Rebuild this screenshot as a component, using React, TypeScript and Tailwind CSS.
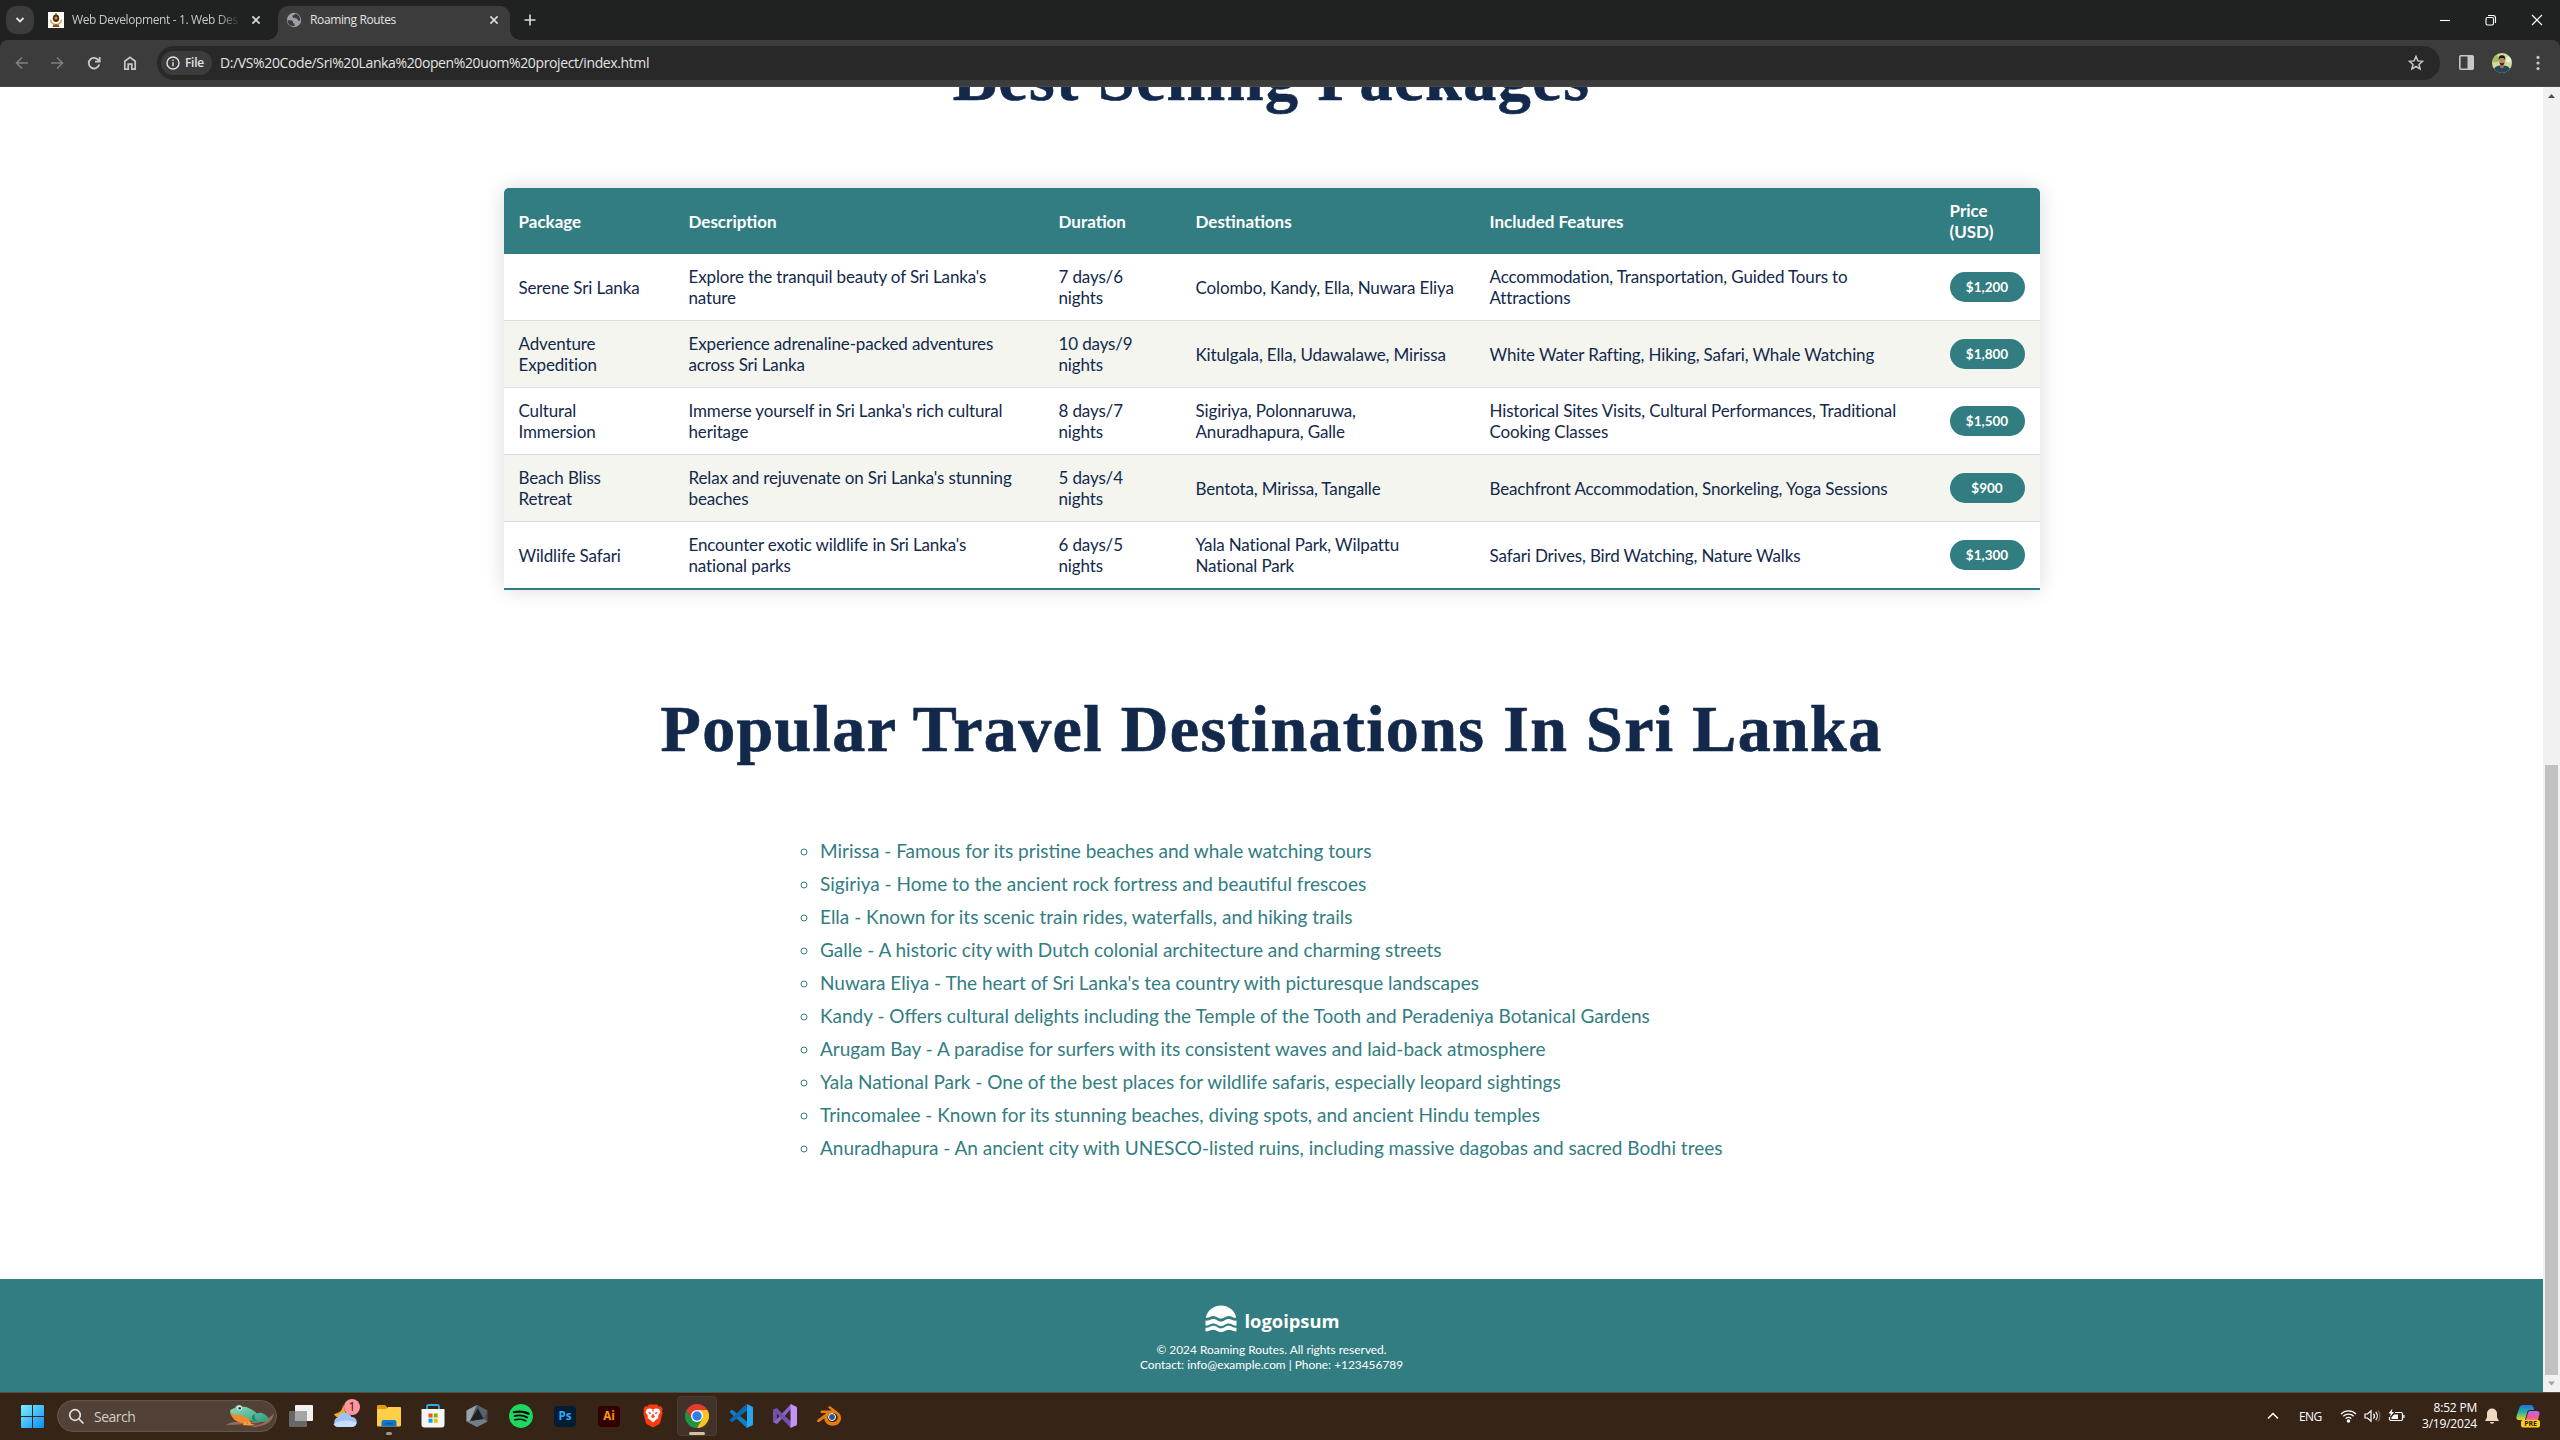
import type { ReactNode } from 'react';
import { SiSpotify, SiBlender } from 'react-icons/si';

const packages = [
  ['Serene Sri Lanka', "Explore the tranquil beauty of Sri Lanka's nature", '7 days/6 nights', 'Colombo, Kandy, Ella, Nuwara Eliya', 'Accommodation, Transportation, Guided Tours to Attractions', '$1,200'],
  ['Adventure Expedition', 'Experience adrenaline-packed adventures across Sri Lanka', '10 days/9 nights', 'Kitulgala, Ella, Udawalawe, Mirissa', 'White Water Rafting, Hiking, Safari, Whale Watching', '$1,800'],
  ['Cultural Immersion', "Immerse yourself in Sri Lanka's rich cultural heritage", '8 days/7 nights', 'Sigiriya, Polonnaruwa, Anuradhapura, Galle', 'Historical Sites Visits, Cultural Performances, Traditional Cooking Classes', '$1,500'],
  ['Beach Bliss Retreat', "Relax and rejuvenate on Sri Lanka's stunning beaches", '5 days/4 nights', 'Bentota, Mirissa, Tangalle', 'Beachfront Accommodation, Snorkeling, Yoga Sessions', '$900'],
  ['Wildlife Safari', "Encounter exotic wildlife in Sri Lanka's national parks", '6 days/5 nights', 'Yala National Park, Wilpattu National Park', 'Safari Drives, Bird Watching, Nature Walks', '$1,300'],
];

const destinations = [
  'Mirissa - Famous for its pristine beaches and whale watching tours',
  'Sigiriya - Home to the ancient rock fortress and beautiful frescoes',
  'Ella - Known for its scenic train rides, waterfalls, and hiking trails',
  'Galle - A historic city with Dutch colonial architecture and charming streets',
  "Nuwara Eliya - The heart of Sri Lanka's tea country with picturesque landscapes",
  'Kandy - Offers cultural delights including the Temple of the Tooth and Peradeniya Botanical Gardens',
  'Arugam Bay - A paradise for surfers with its consistent waves and laid-back atmosphere',
  'Yala National Park - One of the best places for wildlife safaris, especially leopard sightings',
  'Trincomalee - Known for its stunning beaches, diving spots, and ancient Hindu temples',
  'Anuradhapura - An ancient city with UNESCO-listed ruins, including massive dagobas and sacred Bodhi trees',
];

function TabClose() {
  return (
    <svg className="size-3 shrink-0" viewBox="0 0 12 12" stroke="#dcdcdc" strokeWidth="1.6" fill="none">
      <path d="M2.4 2.4l7.2 7.2M9.6 2.4L2.4 9.6" />
    </svg>
  );
}

function TabStrip() {
  return (
    <div className="flex h-10 shrink-0 bg-[#202221] text-[12px] tracking-[-0.37px]">
      <div className="ml-1.5 mt-1.5 flex h-7 w-7 items-center justify-center rounded-[10px] bg-[#3c3c3c]">
        <svg width="10" height="8" viewBox="0 0 10 8" fill="none" stroke="#e3e3e3" strokeWidth="1.8">
          <path d="M1.5 2l3.5 3.5L8.5 2" />
        </svg>
      </div>
      <div className="ml-3.5 flex w-[230px] items-center text-[#c6c7c6]">
        <svg className="shrink-0" width="16" height="16" viewBox="0 0 16 16">
          <path fill="#fff" d="M0 0h16v16H0z" />
          <path d="M7 1h2v3H7z" fill="#c9963a" />
          <ellipse cx="8" cy="6.3" rx="3.2" ry="3.8" fill="#4b2c1b" />
          <circle cx="8" cy="6" r="1.6" fill="#c9963a" />
          <path d="M2.5 7.5c.5 4 3 5 5.5 5s5-1 5.500-5" fill="none" stroke="#d8a246" strokeWidth="1.500" />
          <path d="M5.500 12.500h5l1 2.500h-7z" fill="#8c4f24" />
        </svg>
        <div className="ml-2 w-[170px] overflow-hidden whitespace-nowrap [mask-image:linear-gradient(to_right,#000_145px,transparent_169px)]">
          Web Development - 1. Web Des
        </div>
        <div className="ml-2 flex">
          <TabClose />
        </div>
      </div>
      <div className="relative mt-1.5 flex h-[34px] w-[232px] items-center rounded-t-[10px] bg-[#3c3c3c] pb-1.5 text-[#e3e3e3]">
        <span className="absolute -left-2.5 bottom-0 h-2.5 w-2.5 bg-[radial-gradient(circle_at_0_0,transparent_9.5px,#3c3c3c_10px)]" />
        <span className="absolute -right-2.5 bottom-0 h-2.5 w-2.5 bg-[radial-gradient(circle_at_100%_0,transparent_9.5px,#3c3c3c_10px)]" />
        <svg className="ml-2 shrink-0" width="16" height="16" viewBox="0 0 16 16">
          <circle cx="8" cy="8" r="7.200" fill="#9aa0a6" />
          <path d="M1.500 8.300c2 .2 4.500-.3 5.300 1 .5.900-.3 1.700.900 2 1.200.2 1 1.500.8 2.800C4.500 14.500 1.500 12 1.500 8.300zM9 1.800c.2 1.200-2.700 1-2.500 2.700.1 1.300 1.700.5 2.500 1.600.8 1 2.300.2 2.600 1.500.3 1.300 1.200 1.200 2.600 1.200C14.500 5 12.500 2.200 9 1.800z" fill="#3c3c3c" />
        </svg>
        <div className="ml-2 w-[178px]">Roaming Routes</div>
        <TabClose />
      </div>
      <div className="ml-[14px] flex items-center">
        <svg width="12" height="12" viewBox="0 0 12 12" stroke="#dcdcdc" strokeWidth="1.6">
          <path d="M6 .5v11M.5 6h11" />
        </svg>
      </div>
      <div className="ml-auto flex items-center text-white">
        <svg width="46" height="40" viewBox="0 0 46 40" stroke="#fff" strokeWidth="1.100">
          <path d="M18 20.500h10" />
        </svg>
        <svg width="46" height="40" viewBox="0 0 46 40" fill="none" stroke="#fff" strokeWidth="1.100">
          <rect x="18" y="17.500" width="7.500" height="7.500" rx="1.500" />
          <path d="M20 15.500h5a2.500 2.500 0 0 1 2.500 2.500v5" />
        </svg>
        <svg width="46" height="40" viewBox="0 0 46 40" stroke="#fff" strokeWidth="1.200">
          <path d="M18 15l10 10M28 15L18 25" />
        </svg>
      </div>
    </div>
  );
}

function Avatar() {
  return (
    <svg width="20" height="20" viewBox="0 0 20 20">
      <clipPath id="face">
        <circle cx="10" cy="10" r="10" />
      </clipPath>
      <g clipPath="url(#face)">
        <path fill="#cfdc9f" d="M0 0h20v20H0z" />
        <circle cx="3.500" cy="6" r="3.500" fill="#a3bd5c" />
        <circle cx="17" cy="6.500" r="3" fill="#eef0d0" />
        <path d="M1 20c.5-6 3.500-7.500 9-7.500s8.500 1.500 9 7.500z" fill="#27465c" />
        <path d="M8 11h4v3L10 15.500 8 14z" fill="#a8714f" />
        <ellipse cx="10" cy="8" rx="2.800" ry="3.800" fill="#bd8762" />
        <path d="M6.900 7.500C6.200 3.500 8 2.300 10 2.300s3.800 1.200 3.100 5.200c-.6-2-1-2.500-3.100-2.500s-2.500.5-3.100 2.500z" fill="#1f1a18" />
        <path d="M7.500 9.500c.5 3.500 4.500 3.500 5 0-.5 1-4.500 1-5 0z" fill="#33241d" />
      </g>
    </svg>
  );
}

function Toolbar() {
  return (
    <div className="shrink-0 bg-[#202221]">
      <div className="flex h-[47px] items-center rounded-t-lg border-b border-[#484848] bg-[#3c3c3c] pb-px text-[14px]">
        <div className="flex w-[157px] items-center">
          <svg className="ml-[10px]" width="24" height="24" viewBox="0 0 24 24" fill="none" stroke="#7f7f7f" strokeWidth="1.600">
            <path d="M18 12H6.800M12 6.500L6.500 12l5.500 5.500" />
          </svg>
          <svg className="ml-3" width="24" height="24" viewBox="0 0 24 24" fill="none" stroke="#7f7f7f" strokeWidth="1.600">
            <path d="M5 12h11.200M11 6.500l5.500 5.500-5.500 5.500" />
          </svg>
          <svg className="ml-3" width="24" height="24" viewBox="0 0 24 24" fill="none" stroke="#c7c7c7" strokeWidth="1.800">
            <path d="M17 10.200A5.300 5.300 0 1 0 17.200 13.500M17.700 6v4.700H13" />
          </svg>
          <svg className="ml-3" width="24" height="24" viewBox="0 0 24 24" fill="none" stroke="#c7c7c7" strokeWidth="1.700">
            <path d="M6.800 18.200v-8L12 6.300l5.200 3.900v8h-3.400v-5h-3.600v5z" />
          </svg>
        </div>
        <div className="flex h-[34px] w-[2283px] items-center rounded-full bg-[#282828] pl-1">
          <div className="flex h-6 w-[51px] items-center rounded-full bg-[#3c3c3c] pl-[5px] text-[12px] font-semibold tracking-[-0.3px] text-[#e3e3e3]">
            <svg width="14" height="14" viewBox="0 0 14 14" fill="none" stroke="#e3e3e3" strokeWidth="1.400">
              <circle cx="7" cy="7" r="6" />
              <path d="M7 6.200v4M7 3.600v1.500" />
            </svg>
            <span className="ml-[5px]">File</span>
          </div>
          <div className="ml-2 whitespace-nowrap tracking-[-0.385px] text-[#e3e3e3]">D:/VS%20Code/Sri%20Lanka%20open%20uom%20project/index.html</div>
          <svg className="ml-auto mr-4" width="16" height="16" viewBox="0 0 16 16" fill="none" stroke="#c7c7c7" strokeWidth="1.500">
            <path d="M8 1.500l1.900 4.400 4.700.4-3.600 3.100 1.100 4.600L8 11.500 3.900 14 5 9.400 1.400 6.300l4.700-.4z" />
          </svg>
        </div>
        <svg className="ml-[19px]" width="15" height="15" viewBox="0 0 15 15">
          <rect x=".8" y=".8" width="13.400" height="13.400" rx="1" fill="none" stroke="#c7c7c7" strokeWidth="1.600" />
          <path d="M8.500 1H14v13H8.500z" fill="#c7c7c7" />
        </svg>
        <div className="ml-[18px]">
          <Avatar />
        </div>
        <svg className="ml-6" width="4" height="16" viewBox="0 0 4 16" fill="#c7c7c7">
          <circle cx="2" cy="2.400" r="1.600" />
          <circle cx="2" cy="8" r="1.600" />
          <circle cx="2" cy="13.600" r="1.600" />
        </svg>
      </div>
    </div>
  );
}

function PackagesTable() {
  const heads = ['Package', 'Description', 'Duration', 'Destinations', 'Included Features', 'Price (USD)'];
  return (
    <table className="mx-auto mt-[78px] w-[1536px] table-fixed border-separate border-spacing-0 overflow-hidden rounded-t-[5px] text-left text-[17px] leading-[21px] shadow-[0_0_20px_rgba(0,0,0,0.15)]">
      <colgroup>
        <col className="w-[170px]" />
        <col className="w-[370px]" />
        <col className="w-[137px]" />
        <col className="w-[294px]" />
        <col className="w-[460px]" />
        <col className="w-[105px]" />
      </colgroup>
      <thead className="bg-[#327d81] text-white">
        <tr>
          {heads.map((h) => (
            <th key={h} className="px-[15px] py-3 font-bold">{h}</th>
          ))}
        </tr>
      </thead>
      <tbody className="text-[#13294b]">
        {packages.map((row) => (
          <tr key={row[0]} className="group even:bg-[#f4f5ef]">
            {row.slice(0, 5).map((cell) => (
              <td key={cell} className="border-b border-[#dddddd] px-[15px] py-3 tracking-[-0.14px] first:pr-[28px] group-last:border-b-2 group-last:border-[#327d81]">{cell}</td>
            ))}
            <td className="border-b border-[#dddddd] px-[15px] group-last:border-b-2 group-last:border-[#327d81]">
              <div className="flex h-[30px] w-[75px] items-center justify-center rounded-full bg-[#327d81] text-[13.500px] font-bold text-white">{row[5]}</div>
            </td>
          </tr>
        ))}
      </tbody>
    </table>
  );
}

function Footer() {
  return (
    <footer className="mt-[115px] flex h-[113px] flex-col items-center bg-[#327d81] pt-[26px] text-[11.900px] leading-[15px] text-white">
      <svg width="135" height="34" viewBox="0 0 135 34" className="ml-px" fill="#fff">
        <path d="M.8 12.500A15.600 15.600 0 0 1 31.200 12.500c-3 .8-4.500-1.500-7.600-1.500-3.200 0-4.400 2.600-7.600 2.600S11.600 11 8.400 11C5.300 11 3.800 13.300.8 12.500z" />
        <path d="M.5 15.600c3.200.6 4.700-1.700 7.900-1.700s4.400 2.700 7.600 2.700 4.400-2.700 7.600-2.700 4.700 2.300 7.900 1.700v5c-3.200.600-4.700-2-7.900-2s-4.400 2.700-7.600 2.700-4.400-2.700-7.600-2.700-4.700 2.600-7.900 2z" />
        <path d="M.5 22.700c3.200.600 4.700-1.900 7.900-1.900s4.400 2.700 7.600 2.700 4.400-2.700 7.600-2.700 4.700 2.500 7.900 1.900v3.600c-3.200.600-4.700-1.500-7.900-1.500s-4.400 2.500-7.600 2.500-4.400-2.500-7.600-2.500-4.700 2.100-7.900 1.500z" />
        <text x="39.500" y="23" textLength="95" lengthAdjust="spacingAndGlyphs" fontSize="17.500" fontWeight="700" fontFamily="'Open Sans', sans-serif">logoipsum</text>
      </svg>
      <p className="mt-[3px]">© 2024 Roaming Routes. All rights reserved.</p>
      <p>Contact: info@example.com | Phone: +123456789</p>
    </footer>
  );
}

function Page() {
  return (
    <div className="flex h-[1305px] shrink-0 bg-white">
      <main className="w-[2543px] overflow-hidden font-['Lato',sans-serif]">
        <div className="-mt-[41px]">
          <h2 className="text-center font-['Liberation_Serif',serif] text-[66px] font-bold leading-[64px] tracking-[1.560px] text-[#13294b] [-webkit-text-stroke:0.7px_#13294b]">Best Selling Packages</h2>
          <PackagesTable />
          <h2 className="mt-[107px] text-center font-['Liberation_Serif',serif] text-[66px] font-bold leading-[64px] tracking-[1.350px] text-[#13294b] [-webkit-text-stroke:0.7px_#13294b]">Popular Travel Destinations In Sri Lanka</h2>
          <ul className="ml-[820px] mt-[73px] list-[circle] text-[19px] leading-[33px] text-[#327d81]">
            {destinations.map((d) => (
              <li key={d}>{d}</li>
            ))}
          </ul>
          <Footer />
        </div>
      </main>
      <div className="flex w-[17px] flex-col items-center bg-[#f1f1f1]">
        <svg width="17" height="17" viewBox="0 0 17 17" fill="#505050">
          <path d="M5 11l3.500-4L12 11z" />
        </svg>
        <div className="mt-[661px] h-[610px] w-[13px] bg-[#c1c1c1]" />
        <svg width="17" height="17" viewBox="0 0 17 17" fill="#a3a3a3">
          <path d="M5 6.500l3.500 4 3.500-4z" />
        </svg>
      </div>
    </div>
  );
}

function Slot({ children, active, open }: { children: ReactNode; active?: boolean; open?: boolean }) {
  return (
    <div className={active ? 'relative mx-0.5 flex h-10 w-10 items-center justify-center rounded border border-[#4c3d33] bg-[#42332a]' : 'relative flex h-12 w-11 items-center justify-center'}>
      {children}
      {active && <span className="absolute bottom-0 h-[3px] w-4 rounded-full bg-[#d9bda0]" />}
      {open && <span className="absolute bottom-[5px] h-[3px] w-1.5 rounded-full bg-[#a0968f]" />}
    </div>
  );
}

function Frog() {
  return (
    <svg width="48" height="24" viewBox="0 0 48 24">
      <defs>
        <linearGradient id="frogBack" x1="0" y1="0" x2="1" y2="1">
          <stop offset="0" stopColor="#8fe0bd" />
          <stop offset="1" stopColor="#2f9a7b" />
        </linearGradient>
      </defs>
      <path d="M0 21c5-4 12-3 20-3 10 0 18-1 24-5 2-1 3-3 4-4-1 6-5 11-12 12.500-4 1-6 2-10 1-6-2-18-2-26-1.500z" fill="#9a6b58" />
      <path d="M10 21c8-2 22 0 32-6-4 5-10 7-18 7z" fill="#6f4638" />
      <path d="M4 8c1 6 6 10 12 11l7 0 3-8-8-4z" fill="#f08a2c" />
      <path d="M4 7c1-2 3-2.500 5-3 1-3 5-4 7-1.500 6 0 12 4 15 7 4-2 9 1 11 4 1 2 0 4-2 4-6 1-12 1-16-1-3-3-6-5-11-5.500C9 11 5 10 4 7z" fill="url(#frogBack)" />
      <path d="M29 10c-4 2-4 6 0 7l10 1c-5 0-9-1-10-3-1-2 0-4 0-5z" fill="#237d68" />
      <circle cx="13.500" cy="4.200" r="2.400" fill="#e8f4ee" />
      <circle cx="13.700" cy="4.200" r="1.300" fill="#23302e" />
      <path d="M17 21l2-4 2 3 3-3 1 3 4 .5-4 1z" fill="#ffa033" />
    </svg>
  );
}

function Taskbar() {
  return (
    <div className="flex h-12 shrink-0 items-center bg-[#362417] font-['Open_Sans',sans-serif] shadow-[inset_0_1px_0_#5d4c42]">
      <svg className="ml-[21px]" width="23" height="23" viewBox="0 0 23 23">
        <defs>
          <linearGradient id="win" x1="0" y1="0" x2="1" y2="1">
            <stop offset="0" stopColor="#7df0ff" />
            <stop offset="1" stopColor="#0a8cf5" />
          </linearGradient>
        </defs>
        <path d="M1 0h10v11H0V1a1 1 0 0 1 1-1zM12 0h10a1 1 0 0 1 1 1v10H12zM0 12h11v11H1a1 1 0 0 1-1-1zM12 12h11v10a1 1 0 0 1-1 1H12z" fill="url(#win)" />
      </svg>
      <div className="ml-[13px] flex h-8 w-[220px] items-center rounded-full border border-[#65564b] bg-[#514136] pl-2.5 pr-[2px]">
        <svg width="17" height="17" viewBox="0 0 17 17" fill="none" stroke="#e6e0dc" strokeWidth="1.700">
          <circle cx="7" cy="7" r="5.300" />
          <path d="M11 11l4.500 4.500" />
        </svg>
        <span className="ml-[9px] text-[14px] tracking-[-0.5px] text-[#d5cec9]">Search</span>
        <div className="ml-auto">
          <Frog />
        </div>
      </div>
      <div className="ml-0.5 flex items-center">
        <Slot>
          <svg width="24" height="24" viewBox="0 0 24 24">
            <path d="M7 1h16a1 1 0 0 1 1 1v14a1 1 0 0 1-1 1H6V2a1 1 0 0 1 1-1z" fill="#f1f1f1" />
            <path d="M1 7h17v15a1 1 0 0 1-1 1H1a1 1 0 0 1-1-1V8a1 1 0 0 1 1-1z" fill="#696765" />
            <path d="M6 7h12v10H6z" fill="#a6a5a4" />
          </svg>
        </Slot>
        <Slot>
          <svg width="30" height="30" viewBox="0 0 30 30" className="overflow-visible">
            <path d="M13 3c0 6-3 9-9 10 2 5 9 5 12 1z" fill="#f7a823" />
            <path d="M8 26a5 5 0 0 1-.5-9.500A7.500 7.500 0 0 1 21.500 16 5 5 0 0 1 22 26z" fill="#9fc2f5" />
            <path d="M8 26a5 5 0 0 1-4.500-3C9 19 20 19 26.500 21.500A5 5 0 0 1 22 26z" fill="#c9defc" />
            <circle cx="22" cy="6" r="8" fill="#ff959f" />
            <text x="22" y="10" textAnchor="middle" fontSize="12" fill="#201510" fontFamily="'Open Sans', sans-serif">1</text>
          </svg>
        </Slot>
        <Slot open>
          <svg width="24" height="22" viewBox="0 0 24 22">
            <path d="M0 1a1 1 0 0 1 1-1h7l2 2v4H0z" fill="#e19b0e" />
            <path d="M0 4h9l2-2h12a1 1 0 0 1 1 1v17a1.500 1.500 0 0 1-1.500 1.500h-21A1.500 1.500 0 0 1 0 20z" fill="#ffcf48" />
            <path d="M4.500 21.500V17a2 2 0 0 1 2-2h11a2 2 0 0 1 2 2v4.500z" fill="#1377cf" />
            <path d="M8 18h8v1.500H8z" fill="#0c59a4" />
          </svg>
        </Slot>
        <Slot>
          <svg width="24" height="24" viewBox="0 0 24 24">
            <path d="M6 6V2.500A1.500 1.500 0 0 1 7.500 1h9A1.500 1.500 0 0 1 18 2.500V6" fill="none" stroke="#29abec" strokeWidth="1.800" />
            <path d="M.5 5h23v15.500a3 3 0 0 1-3 3h-17a3 3 0 0 1-3-3z" fill="#f4f5f6" />
            <path d="M7.500 9.500h4v4h-4z" fill="#f05023" />
            <path d="M12.700 9.500h4v4h-4z" fill="#7fb800" />
            <path d="M7.500 14.700h4v4h-4z" fill="#00a2ed" />
            <path d="M12.700 14.700h4v4h-4z" fill="#fdb900" />
          </svg>
        </Slot>
        <Slot>
          <svg width="22" height="24" viewBox="0 0 22 24">
            <path d="M11 1l10.500 5.500v11L11 23 .5 17.500v-11z" fill="#4b5258" />
            <path d="M11 1L.5 6.500v11L4 17z" fill="#9ba3aa" />
            <path d="M11 1l10.500 5.500L17.500 15z" fill="#59626a" />
            <path d="M.5 17.500L4 17l13.500-2 4 2.500L11 23z" fill="#747c84" />
            <path d="M12 4.500L4 17l13.500-2z" fill="#1d2125" />
          </svg>
        </Slot>
        <Slot>
          <div className="flex size-6 items-center justify-center rounded-full bg-black">
            <SiSpotify size={24} color="#1ed760" />
          </div>
        </Slot>
        <Slot>
          <div className="flex h-[21px] w-[22px] items-center justify-center rounded-[4px] bg-[#001d34] text-[11.500px] font-bold leading-none text-[#31a8ff]">Ps</div>
        </Slot>
        <Slot>
          <div className="flex h-[21px] w-[22px] items-center justify-center rounded-[4px] bg-[#310000] text-[11.500px] font-bold leading-none text-[#ff9a00]">Ai</div>
        </Slot>
        <Slot>
          <svg width="20" height="24" viewBox="0 0 20 24">
            <path d="M6 .5h8l1.800 2 2.200-.2 1.700 3-.7 1.700.700 2-2.500 9.500c-.3 1-.8 1.500-1.600 2L10 23.500l-5.600-3c-.8-.5-1.300-1-1.600-2L.3 9 1 7l-.7-1.700 1.700-3 2.200.2z" fill="#fb3b12" />
            <path d="M4 5l3-.5 3 .8 3-.8 3 .5 1.500 3-2.500 4 .5 2-2.500 1.700L10 18.500l-3-2.800L4.500 14l.5-2L2.500 8z" fill="#fff" />
            <path d="M5 8l3.200.8L7 10.500zM15 8l-3.200.8L13 10.500zM8 13l2-3.500 2 3.500-2 1zM9 5.500h2l-1 3z" fill="#fb3b12" />
          </svg>
        </Slot>
        <Slot active>
          <svg width="24" height="24" viewBox="0 0 24 24">
            <path d="M6.800 15L1.600 6A12 12 0 0 0 12 24l5.200-9L12 12z" fill="#229342" />
            <path d="M12 6h10.400A12 12 0 0 1 12 24l5.200-9z" fill="#fcc31e" />
            <path d="M1.600 6L6.800 15 12 12V6h10.400A12 12 0 0 0 1.600 6z" fill="#e33b2e" />
            <circle cx="12" cy="12" r="6" fill="#fff" />
            <circle cx="12" cy="12" r="4.700" fill="#2f7de9" />
          </svg>
        </Slot>
        <Slot>
          <svg width="24" height="24" viewBox="0 0 24 24">
            <path d="M18 0v24L1 8.500a1 1 0 0 1 0-1.300L2.300 6a1 1 0 0 1 1.200 0L18 17.200z" fill="#0f7fcc" />
            <path d="M18 6.800L3.500 18a1 1 0 0 1-1.200 0L1 16.800a1 1 0 0 1 0-1.300L17 .5z" fill="#0a6ab4" />
            <path d="M17 .5c.3-.4.8-.6 1.300-.3l4.700 2.300c.600.300 1 .8 1 1.500v16c0 .7-.4 1.200-1 1.500l-4.700 2.300c-.5.300-1 .1-1.300-.3.600.5 1-.2 1-.8V1.300c0-.8-.4-1.300-1-.8z" fill="#27a6f2" />
            <path d="M18 6.800v10.400L11 12z" fill="#362417" />
          </svg>
        </Slot>
        <Slot>
          <svg width="24" height="24" viewBox="0 0 24 24">
            <path d="M0 6l3.500-1.700c.5-.2 1 0 1.300.4L18 20.500v3.300L3.500 9v6.300L0 18z" fill="#6d4aa5" />
            <path d="M3.500 15.500L18 0v5L4.800 19.200c-.5.500-1 .7-1.600.5L0 18V6l3.500 3z" fill="#8a63c9" />
            <path d="M0 6l2.500-1.300c.6-.3 1-.1 1.500.3L18 17.500V24L3.500 9v6L0 18z" fill="#7450ae" />
            <path d="M17.500 0L23 2.500c.6.300 1 .8 1 1.500v16c0 .700-.4 1.200-1 1.500L17.500 24z" fill="#c394f5" />
          </svg>
        </Slot>
        <Slot>
          <div className="relative">
            <SiBlender size={24} color="#e87d0d" />
            <span className="absolute left-[10.500px] top-[8.500px] h-[8px] w-[8.500px] rounded-full border-[1.500px] border-white bg-[#265787]" />
          </div>
        </Slot>
      </div>
      <div className="ml-auto flex items-center text-[12px] tracking-[-0.2px] text-white">
        <svg width="12" height="8" viewBox="0 0 12 8" fill="none" stroke="#fff" strokeWidth="1.500">
          <path d="M1 6.500l5-5 5 5" />
        </svg>
        <span className="ml-5 w-[23px] pt-0.5 tracking-[-0.6px]">ENG</span>
        <svg className="ml-[18px]" width="17" height="16" viewBox="0 0 17 16" fill="none" stroke="#fff" strokeWidth="1.300">
          <path d="M1 6a10.500 10.500 0 0 1 15 0M3.300 8.300a7.300 7.300 0 0 1 10.400 0M5.700 10.600a4 4 0 0 1 5.600 0" />
          <circle cx="8.500" cy="13" r="1.100" fill="#fff" />
        </svg>
        <svg className="ml-[7px]" width="17" height="16" viewBox="0 0 17 16" fill="none" stroke="#fff" strokeWidth="1.200">
          <path d="M1 6v4h2.500l3.500 3.200V2.800L3.500 6zM9.500 5.500a4 4 0 0 1 0 5M11.700 3.800a6.500 6.500 0 0 1 0 8.400" />
          <path d="M13.900 2.300a9 9 0 0 1 0 11.400" stroke="#77695f" />
        </svg>
        <svg className="ml-[7px]" width="17" height="16" viewBox="0 0 17 16" fill="none" stroke="#fff" strokeWidth="1.200">
          <path d="M7 4.500h6a1.500 1.500 0 0 1 1.500 1.500v5a1.500 1.500 0 0 1-1.500 1.500H3A1.500 1.500 0 0 1 1.500 11V9M16 7v3" />
          <path d="M6 6.500h4v4.500H3.500V9.500z" fill="#fff" stroke="none" />
          <path d="M4.500.5L.5 5.500h2.300L2 9l4-5H3.700z" fill="#fff" stroke="none" />
        </svg>
        <div className="ml-[10px] w-[62px] text-right leading-4">
          <div>8:52 PM</div>
          <div>3/19/2024</div>
        </div>
        <svg className="ml-2" width="14" height="16" viewBox="0 0 14 16" fill="#ecd9be">
          <path d="M7 .5a5 5 0 0 1 5 5v4l1.700 2.700a.5.500 0 0 1-.4.800H.700a.5.500 0 0 1-.4-.8L2 9.500v-4a5 5 0 0 1 5-5zM4.700 14h4.600A2.400 2.400 0 0 1 7 15.700 2.400 2.400 0 0 1 4.700 14z" />
        </svg>
        <svg className="ml-[17px] mr-5" width="24" height="24" viewBox="0 0 24 24">
          <defs>
            <linearGradient id="cpA" x1="0" y1="0" x2="0" y2="1">
              <stop offset="0" stopColor="#1c6fe0" />
              <stop offset=".5" stopColor="#27b6a0" />
              <stop offset="1" stopColor="#f5d215" />
            </linearGradient>
            <linearGradient id="cpB" x1="0" y1="0" x2="0" y2="1">
              <stop offset="0" stopColor="#b46bf5" />
              <stop offset=".6" stopColor="#f0569a" />
              <stop offset="1" stopColor="#fb8a4c" />
            </linearGradient>
          </defs>
          <path d="M7 1h8c1.500 0 2 1 2.500 2.500L18 6h-4c-2 0-2.500 1-3 3l-2 7H3c-2.500 0-3-2-2.300-4.500L3.500 3.500C4 2 5 1 7 1z" fill="url(#cpA)" />
          <path d="M14 7h7c2 0 3 1.500 2.300 4L21.500 17H9.500L12 9c.5-1.500 1-2 2-2z" fill="url(#cpB)" />
          <rect x="5" y="16" width="19" height="7.500" rx="2" fill="#ffc91d" />
          <text x="14.500" y="22.300" textAnchor="middle" fontSize="7" fontWeight="700" fill="#2b1d05" fontFamily="'Open Sans', sans-serif">PRE</text>
        </svg>
      </div>
    </div>
  );
}

export default function App() {
  return (
    <div className="flex h-[1440px] w-[2560px] flex-col overflow-hidden bg-white font-['Open_Sans',sans-serif]">
      <TabStrip />
      <Toolbar />
      <Page />
      <Taskbar />
    </div>
  );
}
